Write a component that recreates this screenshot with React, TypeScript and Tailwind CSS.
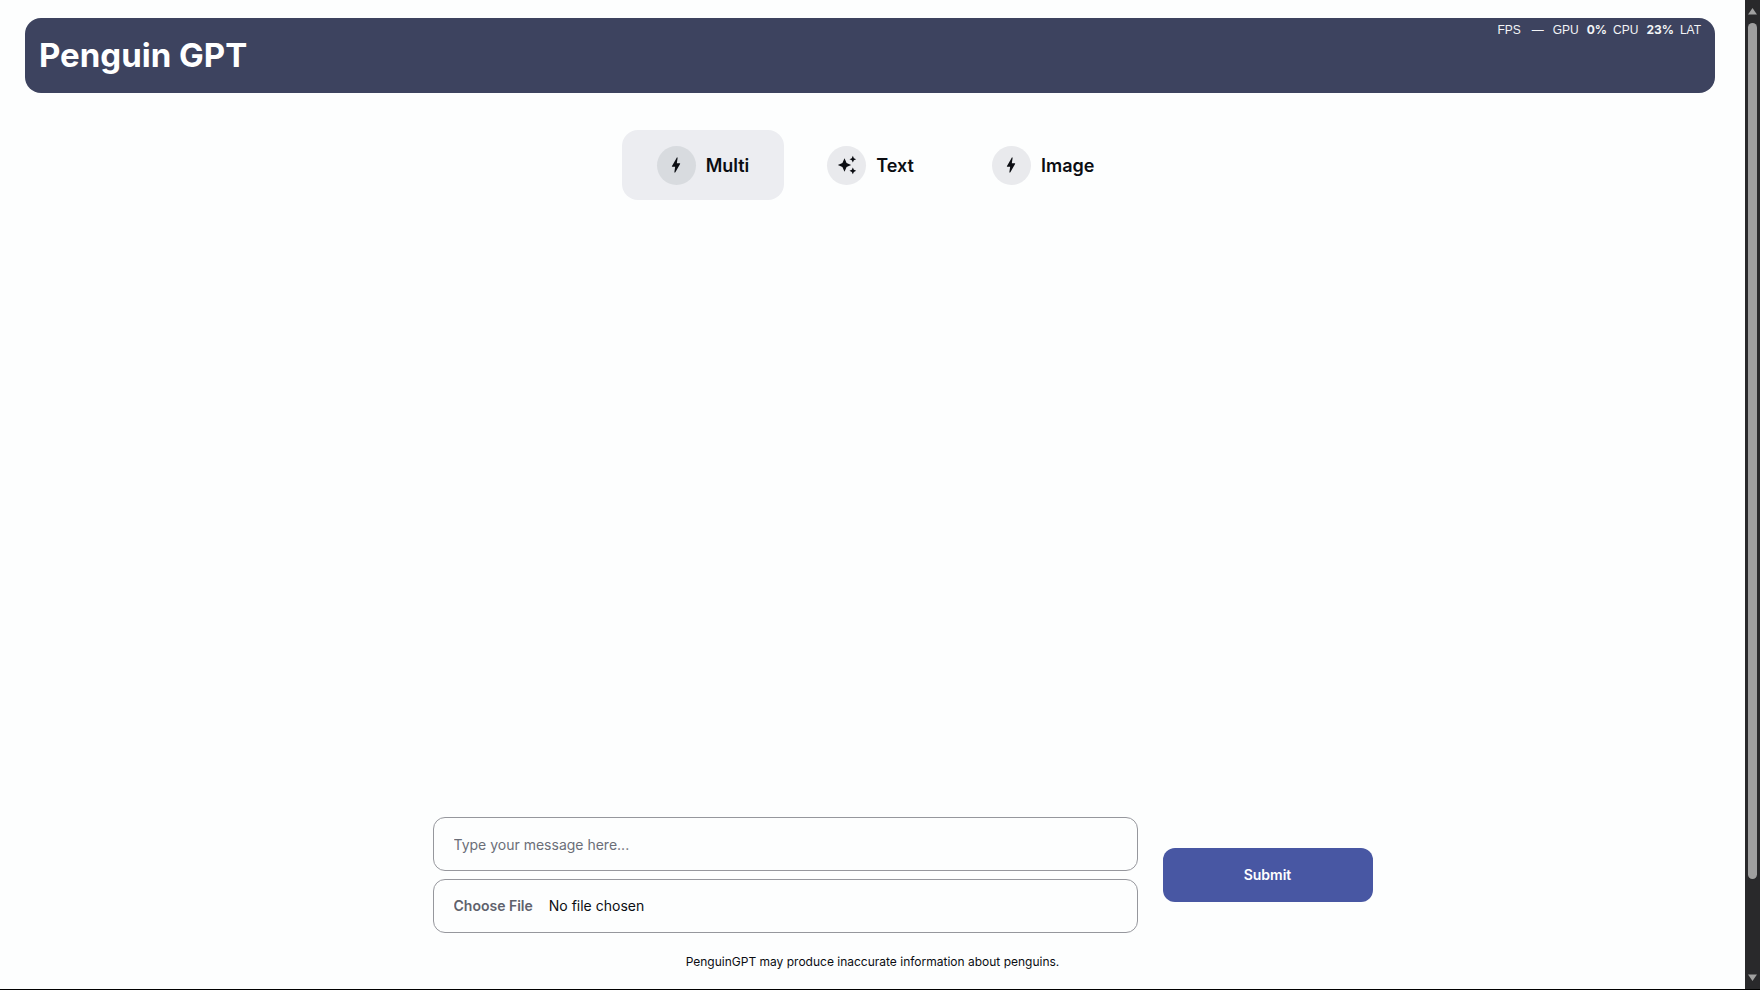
import { useState } from "react"
import { MdAutoAwesome, MdBolt } from "react-icons/md"

const tabs = [
  { name: "Multi", icon: <MdBolt size={20} /> },
  { name: "Text", icon: <MdAutoAwesome size={20} /> },
  { name: "Image", icon: <MdBolt size={20} /> },
]

const stats = [
  { label: "FPS", value: "—" },
  { label: "GPU", value: "0%" },
  { label: "CPU", value: "23%" },
  { label: "LAT", value: "" },
]

const Scrollbar: React.FunctionComponent = () => (
  <div className="flex w-[15px] shrink-0 flex-col items-center bg-[#29292b] py-2" aria-hidden="true">
    <svg viewBox="0 0 9 7" className="mb-2 h-[7px] w-[9px]" fill="#a0a0a0">
      <path d="M4.5 0 9 6.5H0z" />
    </svg>
    <div className="w-[9px] grow-[857] basis-0 rounded-full bg-[#9f9f9f]" />
    <div className="grow-[95] basis-0" />
    <svg viewBox="0 0 9 7" className="h-[7px] w-[9px]" fill="#a0a0a0">
      <path d="M4.5 7 0 .5h9z" />
    </svg>
  </div>
)

const App: React.FunctionComponent = () => {
  const [active, setActive] = useState("Multi")
  const [message, setMessage] = useState("")

  return (
    <div className="flex min-h-screen border-b border-black bg-[#fdfefe] font-['Inter',sans-serif] text-[#0b0d12]">
      <div className="flex flex-1 flex-col">
        <header className="relative ml-[25px] mr-[30px] mt-[18px] flex h-[75px] items-center rounded-2xl bg-[#3d435f] px-[14px]">
          <h1 className="text-[33px] font-bold text-white">Penguin GPT</h1>
          <dl className="absolute right-[14px] top-1 flex gap-[6px] text-xs text-gray-100">
            {stats.map((stat) => (
              <div key={stat.label} className="flex gap-2">
                <dt className="font-['Liberation_Sans',sans-serif]">{stat.label}</dt>
                {stat.value && (
                  <dd className={stat.value === "—" ? "px-[3px]" : "font-bold"}>{stat.value}</dd>
                )}
              </div>
            ))}
          </dl>
        </header>

        <nav className="mt-[37px] flex justify-center gap-2 pl-[6px]">
          {tabs.map((tab) => (
            <button
              key={tab.name}
              type="button"
              onClick={() => setActive(tab.name)}
              className={
                "flex h-[70px] cursor-pointer items-center gap-[10px] rounded-2xl px-[35px] text-lg font-semibold" +
                (active === tab.name ? " bg-[#ecedf1]" : "")
              }
            >
              <span
                className={
                  "flex h-[39px] w-[39px] items-center justify-center rounded-full" +
                  (active === tab.name ? " bg-[#d8dbdf]" : " bg-[#e9eaed]")
                }
              >
                {tab.icon}
              </span>
              <span className="pt-[2px]">{tab.name}</span>
            </button>
          ))}
        </nav>

        <main className="flex-1" />

        <form
          className="mx-auto flex w-full max-w-[1000px] items-center gap-[25px] pl-[60px]"
          onSubmit={(e) => e.preventDefault()}
        >
          <div className="flex flex-1 flex-col gap-2">
            <input
              type="text"
              aria-label="Message"
              value={message}
              onChange={(e) => setMessage(e.target.value)}
              placeholder="Type your message here..."
              className="h-[54px] w-full rounded-xl border border-[#96979d] px-5 text-sm placeholder:text-[#6b6e78]"
            />
            <input
              type="file"
              aria-label="Image file"
              className="h-[54px] w-full rounded-xl border border-[#96979d] px-5 py-4 text-sm file:mr-4 file:font-semibold file:text-[#5f626d]"
            />
          </div>
          <button
            type="submit"
            className="h-[54px] w-[210px] cursor-pointer rounded-xl bg-[#4857a3] text-sm font-semibold text-white"
          >
            Submit
          </button>
        </form>

        <p className="mt-5 mb-[18px] text-center text-xs leading-[18px]">
          PenguinGPT may produce inaccurate information about penguins.
        </p>
      </div>
      <Scrollbar />
    </div>
  )
}

export default App
